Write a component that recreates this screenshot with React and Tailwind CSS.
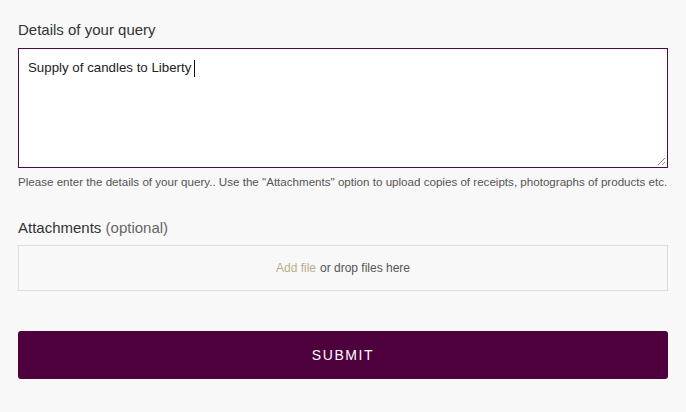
export default function App() {
  return (
    <div className="min-h-[412px] w-full bg-[#f8f8f8] px-[18px] pt-[19px] font-['Liberation_Sans',Arial,sans-serif] text-[#333]">
      <div className="text-[15px] leading-[22px] text-[#333]">Details of your query</div>
      <div className="relative mt-[7px] h-[120px] w-[650px] border border-[#4e0a44] bg-white px-[9px] pt-[9px]">
        <div className="flex items-center text-[13.3px] leading-[20px] text-[#222]">
          <span>Supply of candles to Liberty</span>
          <span className="ml-[3px] inline-block h-[17px] w-px bg-[#111]"></span>
        </div>
        <svg className="absolute bottom-[1px] right-[1px]" width="9" height="9" viewBox="0 0 9 9">
          <line x1="1" y1="8" x2="8" y2="1" stroke="#888" strokeWidth="1" />
          <line x1="5" y1="8" x2="8" y2="5" stroke="#888" strokeWidth="1" />
        </svg>
      </div>
      <div className="mt-[6px] text-[11.6px] leading-[16px] text-[#555]">
        Please enter the details of your query.. Use the "Attachments" option to upload copies of receipts, photographs of products etc.
      </div>
      <div className="mt-[27px] text-[15px] leading-[22px] text-[#333]">
        Attachments <span className="text-[#666]">(optional)</span>
      </div>
      <div className="mt-[6px] flex h-[46px] w-[650px] items-center justify-center border border-[#ddd] text-[12px] text-[#555]">
        <span className="text-[#b8b08a]">Add file</span>
        <span className="ml-[4px]">or drop files here</span>
      </div>
      <button className="mt-[40px] flex h-[48px] w-[650px] items-center justify-center rounded-[3px] bg-[#4e003d] text-[14px] tracking-[1.6px] text-white">
        SUBMIT
      </button>
    </div>
  );
}
